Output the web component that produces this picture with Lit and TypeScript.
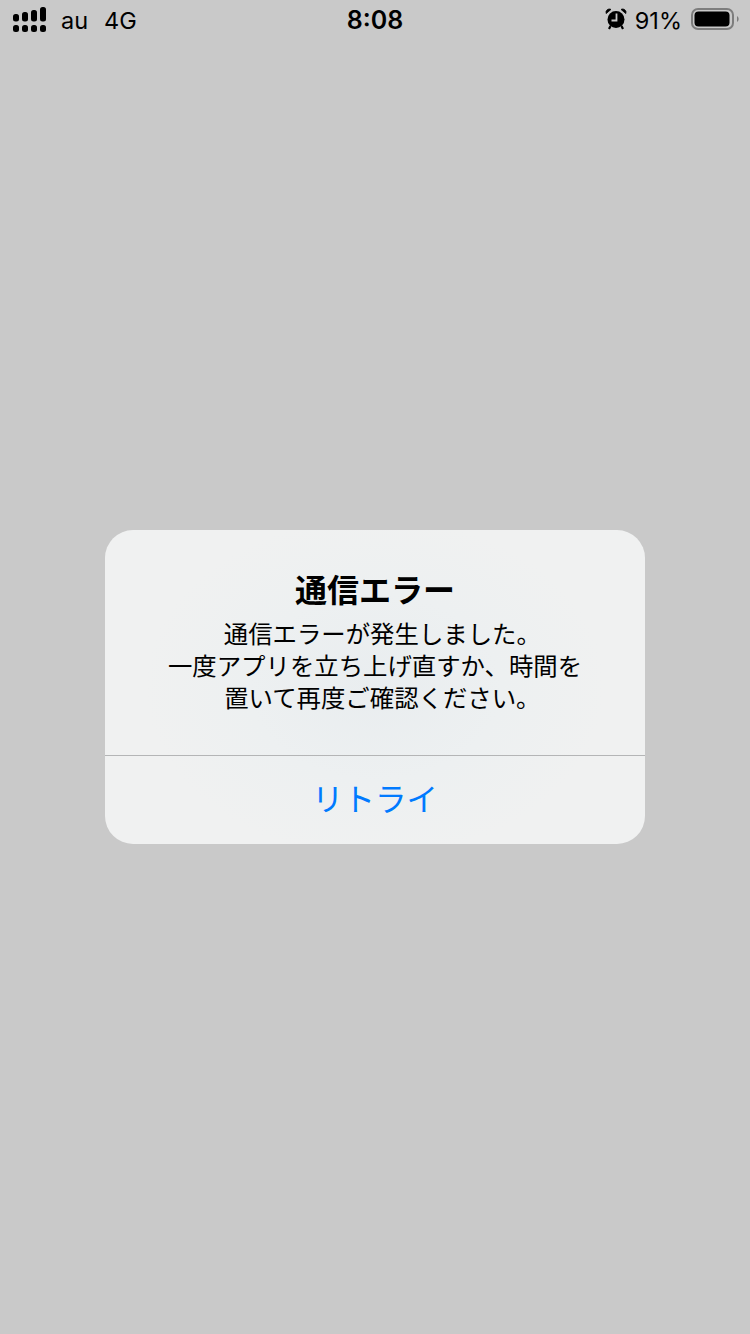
import { LitElement, html, css } from "lit";
import { customElement } from "lit/decorators.js";

const SANS = css`"Liberation Sans", "Noto Sans CJK JP", sans-serif`;

@customElement("app-root")
export class AppRoot extends LitElement {
  static styles = css`
    :host {
      display: block;
      position: relative;
      width: 750px;
      height: 1334px;
      background: #c9c9c9;
      overflow: hidden;
      font-family: ${SANS};
      color: #000;
    }
    .status {
      display: flex;
      align-items: center;
      justify-content: space-between;
      height: 40px;
      padding: 0 11px 0 13px;
      box-sizing: border-box;
      font-family: Inter, "Liberation Sans", sans-serif;
      font-size: 23.5px;
      position: relative;
    }
    .left, .right { display: flex; align-items: center; }
    .signal { display: block; margin-right: 15px; }
    .carrier { margin-right: 16px; }
    .time {
      position: absolute;
      left: 0;
      right: 0;
      text-align: center;
      font-weight: 600;
      font-size: 25px;
    }
    .pct { margin: 0 9px 0 8px; }
    .stage {
      display: flex;
      justify-content: center;
      padding-top: 490px;
    }
    .alert {
      width: 540px;
      height: 314px;
      border-radius: 28px;
      display: flex;
      flex-direction: column;
      background: radial-gradient(ellipse 230px 170px at 50% 50%, #e9edef 0%, #edf0f1 55%, #f0f1f1 100%);
    }
    .body {
      height: 226px;
      box-sizing: border-box;
      border-bottom: 1px solid #b4b5b6;
      padding-top: 41px;
      text-align: center;
    }
    .title {
      font-size: 32px;
      line-height: 40px;
      font-weight: 700;
      margin-bottom: 8px;
    }
    .msg {
      font-size: 24.4px;
      line-height: 32px;
    }
    .hang {
      display: inline-block;
      width: 0.4em;
      text-align: left;
      white-space: nowrap;
    }
    .btn {
      flex: 1;
      display: flex;
      align-items: center;
      justify-content: center;
      color: #007aff;
      font-size: 31.5px;
      padding-bottom: 6px;
    }
  `;

  render() {
    return html`
      <div class="status">
        <div class="left">
          <svg class="signal" width="33" height="26" viewBox="0 0 33 26" fill="#000">
            <rect x="0" y="7" width="6" height="7.5" rx="2.5"/>
            <rect x="9" y="5" width="6" height="9.5" rx="2.5"/>
            <rect x="18" y="3" width="6" height="11.5" rx="2.5"/>
            <rect x="27" y="0" width="6" height="14.5" rx="2.5"/>
            <rect x="0" y="18" width="6" height="7" rx="2.5"/>
            <rect x="9" y="18" width="6" height="7" rx="2.5"/>
            <rect x="18" y="18" width="6" height="7" rx="2.5"/>
            <rect x="27" y="18" width="6" height="7" rx="2.5"/>
          </svg>
          <span class="carrier">au</span>
          <span>4G</span>
        </div>
        <div class="time">8:08</div>
        <div class="right">
          <svg width="22" height="24" viewBox="0 0 22 24">
            <circle cx="11" cy="11.5" r="8.5" fill="#000"/>
            <path d="M1.2 5.6 L6 1.4 A3.4 3.4 0 0 0 1.2 5.6Z M20.8 5.6 L16 1.4 A3.4 3.4 0 0 1 20.8 5.6Z" fill="#000" stroke="#000" stroke-width="0.8"/>
            <path d="M11.5 5.5 V12.5 H6.5" fill="none" stroke="#c9c9c9" stroke-width="1.8"/>
            <path d="M5.5 18 L4 21 M16.5 18 L18 21" stroke="#000" stroke-width="2.2"/>
          </svg>
          <span class="pct">91%</span>
          <svg width="48" height="24" viewBox="0 0 48 24">
            <rect x="1" y="1" width="41" height="20" rx="6" fill="none" stroke="#7d7d7d" stroke-width="2"/>
            <rect x="3.5" y="3.5" width="35" height="15" rx="4" fill="#000"/>
            <path d="M46 8 A3.5 3.5 0 0 1 46 14Z" fill="#7d7d7d"/>
          </svg>
        </div>
      </div>
      <div class="stage">
        <div class="alert">
          <div class="body">
            <div class="title">通信エラー</div>
            <div class="msg">通信エラーが発生しました<span class="hang">。</span><br />一度アプリを立ち上げ直すか、時間を<br />置いて再度ご確認ください<span class="hang">。</span></div>
          </div>
          <div class="btn">リトライ</div>
        </div>
      </div>
    `;
  }
}
